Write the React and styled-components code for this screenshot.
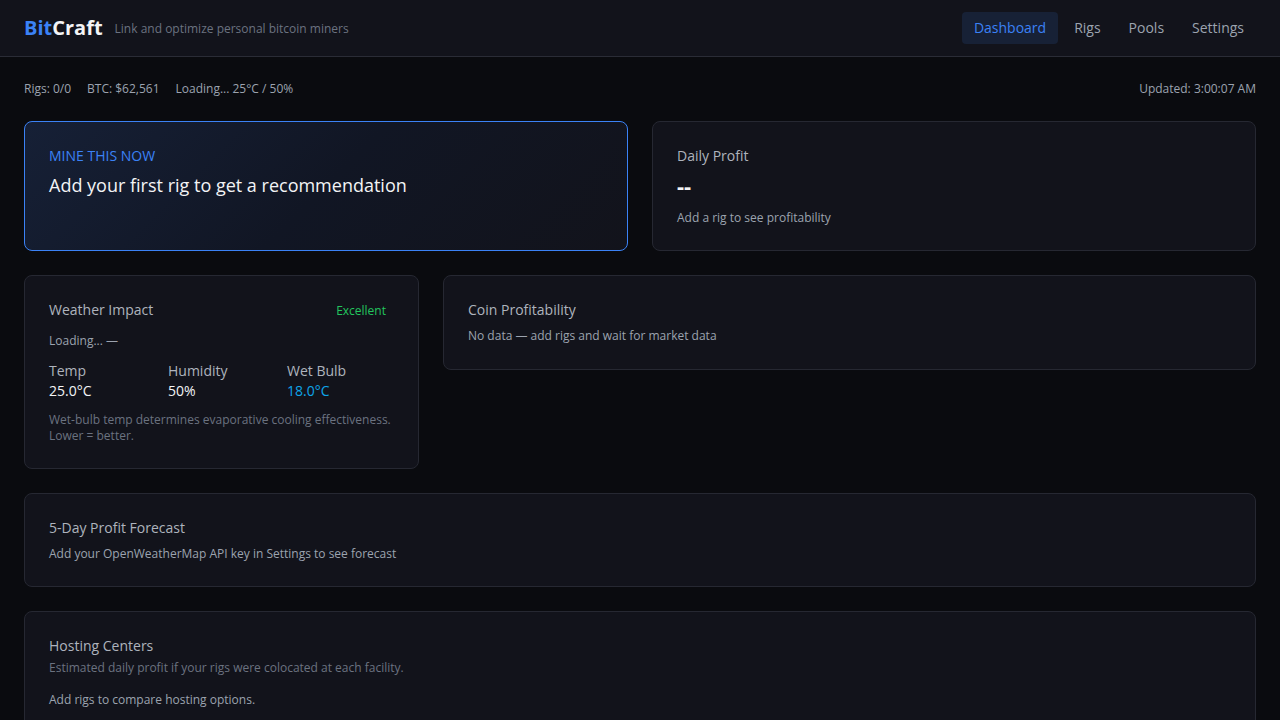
import React from 'react';
import styled, { createGlobalStyle } from 'styled-components';

const GlobalStyle = createGlobalStyle`
  html, body {
    margin: 0;
    padding: 0;
    background: #0a0b0f;
    color: #e5e7eb;
    font-family: "Open Sans", "Noto Sans", sans-serif;
  }
  * { box-sizing: border-box; }
`;

const Header = styled.header`
  height: 57px;
  background: #12131b;
  border-bottom: 1px solid #2a2c36;
  display: flex;
  align-items: center;
  justify-content: space-between;
  padding: 0 24px 1px;
`;

const Brand = styled.div`
  display: flex;
  align-items: center;
  gap: 12px;
`;

const Logo = styled.div`
  font-size: 20px;
  font-weight: 700;
  color: #f3f4f6;
  span { color: #3b82f6; }
`;

const Tagline = styled.div`
  font-size: 12px;
  color: #6b7280;
  padding-top: 1px;
`;

const Nav = styled.nav`
  display: flex;
`;

const NavLink = styled.a`
  font-size: 14px;
  padding: 0 12px;
  height: 32px;
  display: flex;
  align-items: center;
  border-radius: 4px;
  margin-left: 4px;
  color: ${(p) => (p.$active ? '#3b82f6' : '#9ca3af')};
  background: ${(p) => (p.$active ? '#172136' : 'transparent')};
  cursor: pointer;
`;

const Main = styled.main`
  padding: 23px 24px 24px;
  display: flex;
  flex-direction: column;
  gap: 24px;
`;

const StatusBar = styled.div`
  display: flex;
  justify-content: space-between;
  font-size: 12px;
  color: #9ca3af;
  height: 17px;
`;

const StatusGroup = styled.div`
  display: flex;
  gap: 16px;
`;

const TopGrid = styled.div`
  display: grid;
  grid-template-columns: 1fr 1fr;
  gap: 24px;
`;

const MidGrid = styled.div`
  display: grid;
  grid-template-columns: 395px 1fr;
  gap: 24px;
  align-items: start;
`;

const Card = styled.section`
  background: #12131b;
  border: 1px solid #262832;
  border-radius: 8px;
  padding: 24px;
`;

const HeroCard = styled(Card)`
  border-color: #3b82f6;
  background: linear-gradient(135deg, #162036 0%, #111624 50%, #12131b 100%);
  min-height: 130px;
`;

const Eyebrow = styled.div`
  font-size: 14px;
  color: #3b82f6;
  line-height: 20px;
`;

const HeroTitle = styled.div`
  font-size: 18px;
  color: #f3f4f6;
  line-height: 26px;
  margin-top: 6px;
`;

const CardTitle = styled.div`
  font-size: 14px;
  color: #aeb3bd;
  line-height: 20px;
`;

const BigValue = styled.div`
  font-size: 22px;
  font-weight: 700;
  color: #f3f4f6;
  line-height: 26px;
  margin-top: 6px;
`;

const Muted = styled.div`
  font-size: 12px;
  color: #9ca3af;
  line-height: ${(p) => p.$lh || 18}px;
  margin-top: ${(p) => p.$mt || 0}px;
`;

const Dim = styled.div`
  font-size: 12px;
  color: #6b7280;
  line-height: 16px;
  margin-top: ${(p) => p.$mt || 0}px;
`;

const CardHead = styled.div`
  display: flex;
  justify-content: space-between;
  align-items: center;
`;

const Badge = styled.span`
  font-size: 12px;
  color: #22c55e;
  padding: 0 8px;
`;

const Metrics = styled.div`
  display: grid;
  grid-template-columns: repeat(3, 1fr);
  gap: 12px;
  margin-top: 11px;
`;

const MetricLabel = styled.div`
  font-size: 14px;
  color: #aeb3bd;
  line-height: 20px;
`;

const MetricValue = styled.div`
  font-size: 14px;
  color: ${(p) => p.$color || '#f3f4f6'};
  line-height: 20px;
`;

export default function App() {
  return (
    <>
      <GlobalStyle />
      <Header>
        <Brand>
          <Logo><span>Bit</span>Craft</Logo>
          <Tagline>Link and optimize personal bitcoin miners</Tagline>
        </Brand>
        <Nav>
          <NavLink $active>Dashboard</NavLink>
          <NavLink>Rigs</NavLink>
          <NavLink>Pools</NavLink>
          <NavLink>Settings</NavLink>
        </Nav>
      </Header>
      <Main>
        <StatusBar>
          <StatusGroup>
            <span>Rigs: 0/0</span>
            <span>BTC: $62,561</span>
            <span>Loading... 25°C / 50%</span>
          </StatusGroup>
          <span>Updated: 3:00:07 AM</span>
        </StatusBar>

        <TopGrid>
          <HeroCard>
            <Eyebrow>MINE THIS NOW</Eyebrow>
            <HeroTitle>Add your first rig to get a recommendation</HeroTitle>
          </HeroCard>
          <Card>
            <CardTitle>Daily Profit</CardTitle>
            <BigValue>--</BigValue>
            <Muted $mt={12} $lh={15}>Add a rig to see profitability</Muted>
          </Card>
        </TopGrid>

        <MidGrid>
          <Card>
            <CardHead>
              <CardTitle>Weather Impact</CardTitle>
              <Badge>Excellent</Badge>
            </CardHead>
            <Muted $mt={12}>Loading... —</Muted>
            <Metrics>
              <div>
                <MetricLabel>Temp</MetricLabel>
                <MetricValue>25.0°C</MetricValue>
              </div>
              <div>
                <MetricLabel>Humidity</MetricLabel>
                <MetricValue>50%</MetricValue>
              </div>
              <div>
                <MetricLabel>Wet Bulb</MetricLabel>
                <MetricValue $color="#0ea5e9">18.0°C</MetricValue>
              </div>
            </Metrics>
            <Dim $mt={11}>
              Wet-bulb temp determines evaporative cooling effectiveness. Lower = better.
            </Dim>
          </Card>
          <Card>
            <CardTitle>Coin Profitability</CardTitle>
            <Muted $mt={7}>No data — add rigs and wait for market data</Muted>
          </Card>
        </MidGrid>

        <Card>
          <CardTitle>5-Day Profit Forecast</CardTitle>
          <Muted $mt={7} $lh={17}>Add your OpenWeatherMap API key in Settings to see forecast</Muted>
        </Card>

        <Card>
          <CardTitle>Hosting Centers</CardTitle>
          <Dim $mt={4}>Estimated daily profit if your rigs were colocated at each facility.</Dim>
          <Muted $mt={15}>Add rigs to compare hosting options.</Muted>
        </Card>
      </Main>
    </>
  );
}
